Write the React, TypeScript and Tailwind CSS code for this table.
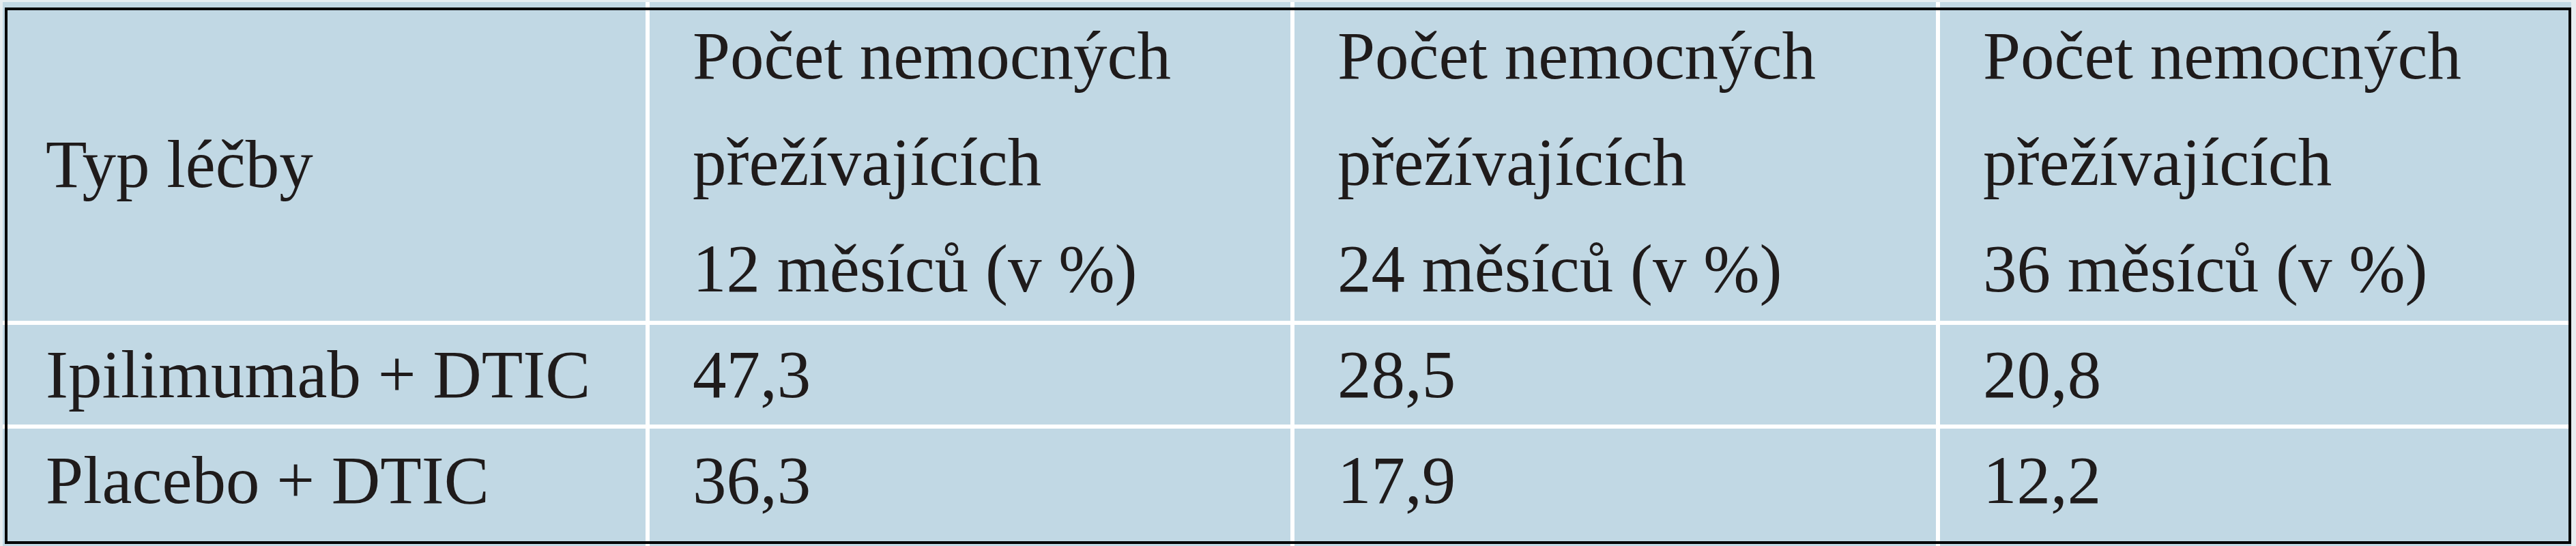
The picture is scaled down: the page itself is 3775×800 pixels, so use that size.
import { Fragment } from "react";

const HEAD = ["12", "24", "36"];

const ROWS = [
  { name: "Ipilimumab + DTIC", values: ["47,3", "28,5", "20,8"] },
  { name: "Placebo + DTIC", values: ["36,3", "17,9", "12,2"] },
];

export default function App() {
  return (
    <div className="w-[3775px] h-[800px] bg-[#e6edf1] pt-[3px] pl-[4px] pr-[7px] font-['Liberation_Serif','Times_New_Roman',serif] text-[99px] text-[#1f1b1b]">
      <div className="relative h-[797px] bg-white grid grid-cols-[942px_939px_940px_925px] grid-rows-[467px_146px_172px] gap-[6px]">
        {/* header */}
        <div className="bg-[#c1d8e4] flex items-center pt-[8px] pl-[63px] leading-[156px] whitespace-nowrap">
          Typ léčby
        </div>
        {HEAD.map((m) => (
          <div key={m} className="bg-[#c1d8e4] pt-[1px] pl-[63px] leading-[156px] whitespace-nowrap">
            <div>Počet nemocných</div>
            <div>přežívajících</div>
            <div>{m} měsíců (v %)</div>
          </div>
        ))}

        {/* data rows */}
        {ROWS.map((r, i) => (
          <Fragment key={r.name}>
            <div className={`bg-[#c1d8e4] pl-[63px] leading-[146px] whitespace-nowrap ${i === 1 ? "pt-[3px]" : "pt-0"}`}>
              {r.name}
            </div>
            {r.values.map((v) => (
              <div
                key={v}
                className={`bg-[#c1d8e4] pl-[63px] leading-[146px] whitespace-nowrap ${i === 1 ? "pt-[3px]" : "pt-0"}`}
              >
                {v}
              </div>
            ))}
          </Fragment>
        ))}

        {/* black frame drawn over the table */}
        <div className="absolute left-[3px] top-[8px] right-0 bottom-[3px] border-4 border-black pointer-events-none" />
      </div>
    </div>
  );
}
